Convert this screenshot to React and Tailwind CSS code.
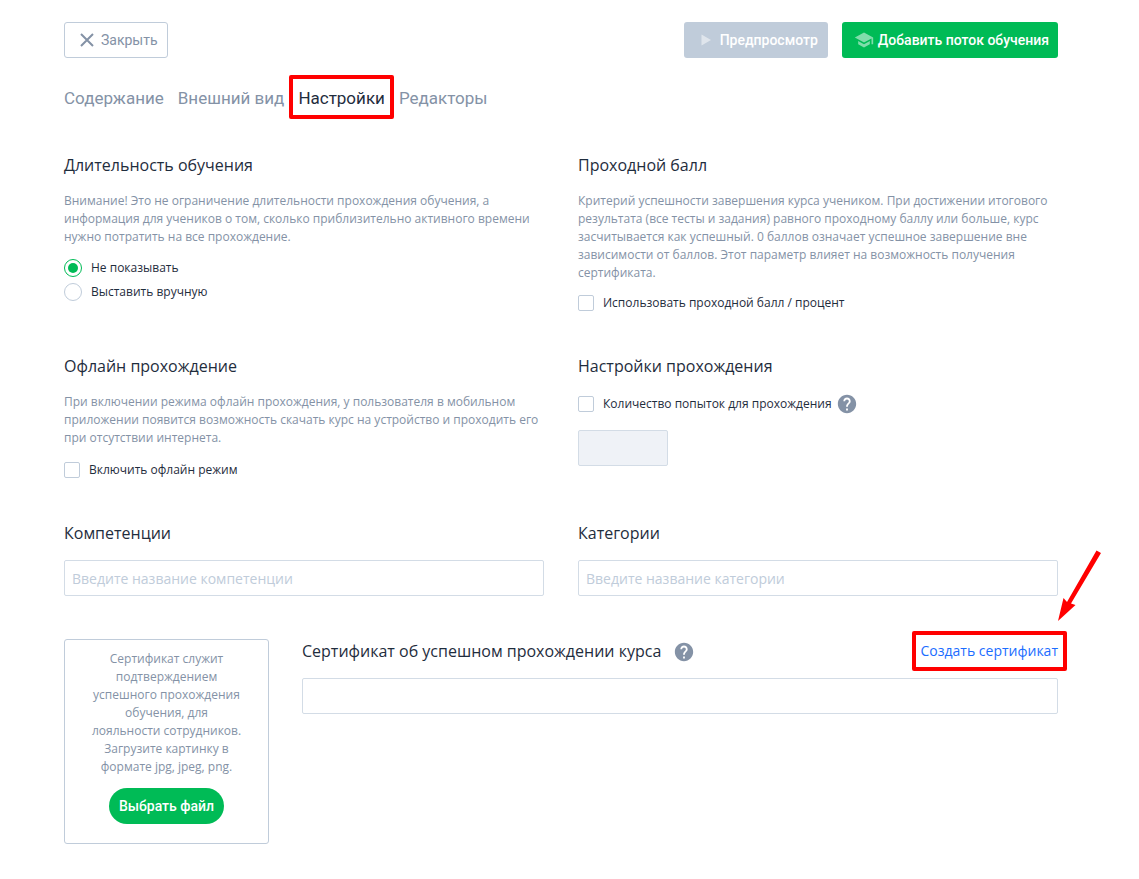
import { MdHelp, MdSchool } from "react-icons/md";

const tabs = ["Содержание", "Внешний вид", "Настройки", "Редакторы"];

const Heading = ({ children }) => <h2 className="text-base leading-6">{children}</h2>;

const Hint = ({ children }) => (
  <p className="mt-[15px] text-xs leading-[18px] text-[#8492a6]">{children}</p>
);

const Help = () => (
  <button type="button" aria-label="Справка" className="shrink-0 text-[#8492a6]">
    <MdHelp size={22} />
  </button>
);

const Checkbox = ({ label }) => (
  <label className="flex items-center gap-[9px] text-xs leading-4">
    <input
      type="checkbox"
      className="size-4 shrink-0 appearance-none rounded-xs border border-[#c0ccda] bg-white checked:bg-[#00bb56]"
    />
    {label}
  </label>
);

const Radio = ({ label, defaultChecked }) => (
  <label className="flex items-center gap-[9px] text-xs leading-4">
    <input
      type="radio"
      name="duration"
      defaultChecked={defaultChecked}
      className="grid size-[18px] shrink-0 appearance-none place-items-center rounded-full border border-[#c0ccda] bg-white before:size-[10px] before:rounded-full checked:border-[#00bb56] checked:before:bg-[#00bb56]"
    />
    {label}
  </label>
);

const TextField = ({ id, label, placeholder }) => (
  <section>
    <Heading>
      <label htmlFor={id}>{label}</label>
    </Heading>
    <input
      id={id}
      type="text"
      placeholder={placeholder}
      className="mt-[15px] block h-9 w-full rounded-xs border border-[#d3dce6] px-[7px] text-sm placeholder:text-[#c0ccda]"
    />
  </section>
);

const Header = () => (
  <header className="flex items-center justify-between font-[Roboto,sans-serif] text-sm font-medium">
    <button
      type="button"
      className="flex h-9 items-center gap-0.5 rounded-[3px] border border-[#c0ccda] pr-[9px] pl-[10px] font-normal text-[#8492a6]"
    >
      <svg viewBox="0 0 24 24" className="size-6" fill="none" stroke="currentColor" strokeWidth="2">
        <path d="M6 6l12 12M18 6L6 18" />
      </svg>
      Закрыть
    </button>
    <div className="flex gap-[14px]">
      <button
        type="button"
        disabled
        className="flex h-9 items-center gap-0.5 rounded-[3px] bg-[#c0ccda] px-[10px] text-white"
      >
        <svg viewBox="0 0 24 24" className="size-6 opacity-50" fill="currentColor">
          <path d="M7.500 6.500v11l9.500-5.500z" />
        </svg>
        Предпросмотр
      </button>
      <button
        type="button"
        className="flex h-9 items-center gap-1 rounded-[3px] bg-[#00bb56] pr-[9px] pl-3 text-white"
      >
        <MdSchool size={20} className="opacity-50" />
        Добавить поток обучения
      </button>
    </div>
  </header>
);

const Tabs = () => (
  <nav className="mt-7 flex gap-[14px] font-[Roboto,sans-serif] text-[17px] leading-6">
    {tabs.map((tab) =>
      tab === "Настройки" ? (
        <a key={tab} href="#" aria-current="page" className="relative text-[#1f2d3d]">
          {tab}
          <span className="absolute -inset-x-[9px] -top-[11px] -bottom-[9px] rounded-xs border-4 border-[#ff0000]" />
        </a>
      ) : (
        <a key={tab} href="#" className="text-[#8492a6]">
          {tab}
        </a>
      )
    )}
  </nav>
);

const Certificate = () => (
  <section className="mt-[43px] flex gap-[33px]">
    <div className="flex w-[205px] shrink-0 flex-col items-center rounded-[3px] border border-[#c0ccda] px-6 pt-[10px] pb-[19px]">
      <p className="text-center text-xs leading-[18px] text-[#8492a6]">
        Сертификат служит подтверждением успешного прохождения обучения, для
        <br />
        лояльности сотрудников.
        <br />
        Загрузите картинку в<br />
        формате jpg, jpeg, png.
      </p>
      <button
        type="button"
        className="mt-3 h-9 rounded-full bg-[#00bb56] px-[10px] font-[Roboto,sans-serif] text-sm font-medium text-white"
      >
        Выбрать файл
      </button>
    </div>
    <div className="flex-1">
      <div className="flex items-center justify-between">
        <div className="flex h-6 items-end gap-3">
          <Heading>
            <label htmlFor="certificate">Сертификат об успешном прохождении курса</label>
          </Heading>
          <Help />
        </div>
        <a href="#" className="relative text-sm leading-6 text-[#1b6dff]">
          Создать сертификат
          <span className="absolute -inset-x-[9px] -inset-y-2 rounded-xs border-4 border-[#ff0000]" />
          <svg
            viewBox="0 0 44 74"
            className="absolute -top-[90px] -right-[43px] h-[74px] w-11"
            fill="#ff0000"
          >
            <path d="M39.500 1.500l4.500 2.500L14 54.500l4.500 1.500L1 72 6.500 49l3.500 4z" />
          </svg>
        </a>
      </div>
      <input
        id="certificate"
        type="text"
        className="mt-[15px] block h-9 w-full rounded-xs border border-[#d3dce6] px-[7px] text-sm"
      />
    </div>
  </section>
);

const App = () => {
  return (
    <main className="bg-white pt-[22px] pr-[81px] pb-9 pl-16 font-['Open_Sans',sans-serif] text-[#1f2d3d]">
      <Header />
      <Tabs />
      <div className="mt-[43px] grid grid-cols-2 gap-x-[34px] gap-y-[43px]">
        <section>
          <Heading>Длительность обучения</Heading>
          <Hint>
            Внимание! Это не ограничение длительности прохождения обучения, а<br />
            информация для учеников о том, сколько приблизительно активного времени нужно
            потратить на все прохождение.
          </Hint>
          <div className="mt-[13px] flex flex-col gap-[6px]">
            <Radio label="Не показывать" defaultChecked />
            <Radio label="Выставить вручную" />
          </div>
        </section>
        <section>
          <Heading>Проходной балл</Heading>
          <Hint>
            Критерий успешности завершения курса учеником. При достижении итогового результата
            (все тесты и задания) равного проходному баллу или больше, курс засчитывается как
            успешный. 0 баллов означает успешное завершение вне зависимости от баллов. Этот
            параметр влияет на возможность получения сертификата.
          </Hint>
          <div className="mt-[13px]">
            <Checkbox label="Использовать проходной балл / процент" />
          </div>
        </section>
        <section>
          <Heading>Офлайн прохождение</Heading>
          <Hint>
            При включении режима офлайн прохождения, у пользователя в мобильном приложении
            появится возможность скачать курс на устройство и проходить его при отсутствии
            интернета.
          </Hint>
          <div className="mt-[15px]">
            <Checkbox label="Включить офлайн режим" />
          </div>
        </section>
        <section>
          <Heading>Настройки прохождения</Heading>
          <div className="mt-[15px] flex items-center gap-1">
            <Checkbox label="Количество попыток для прохождения" />
            <Help />
          </div>
          <input
            type="text"
            disabled
            aria-label="Количество попыток"
            className="mt-[15px] block h-9 w-[90px] rounded-xs border border-[#d3dce6] bg-[#eff2f7] px-[7px] text-sm"
          />
        </section>
        <TextField id="skills" label="Компетенции" placeholder="Введите название компетенции" />
        <TextField id="categories" label="Категории" placeholder="Введите название категории" />
      </div>
      <Certificate />
    </main>
  );
};

export default App;
